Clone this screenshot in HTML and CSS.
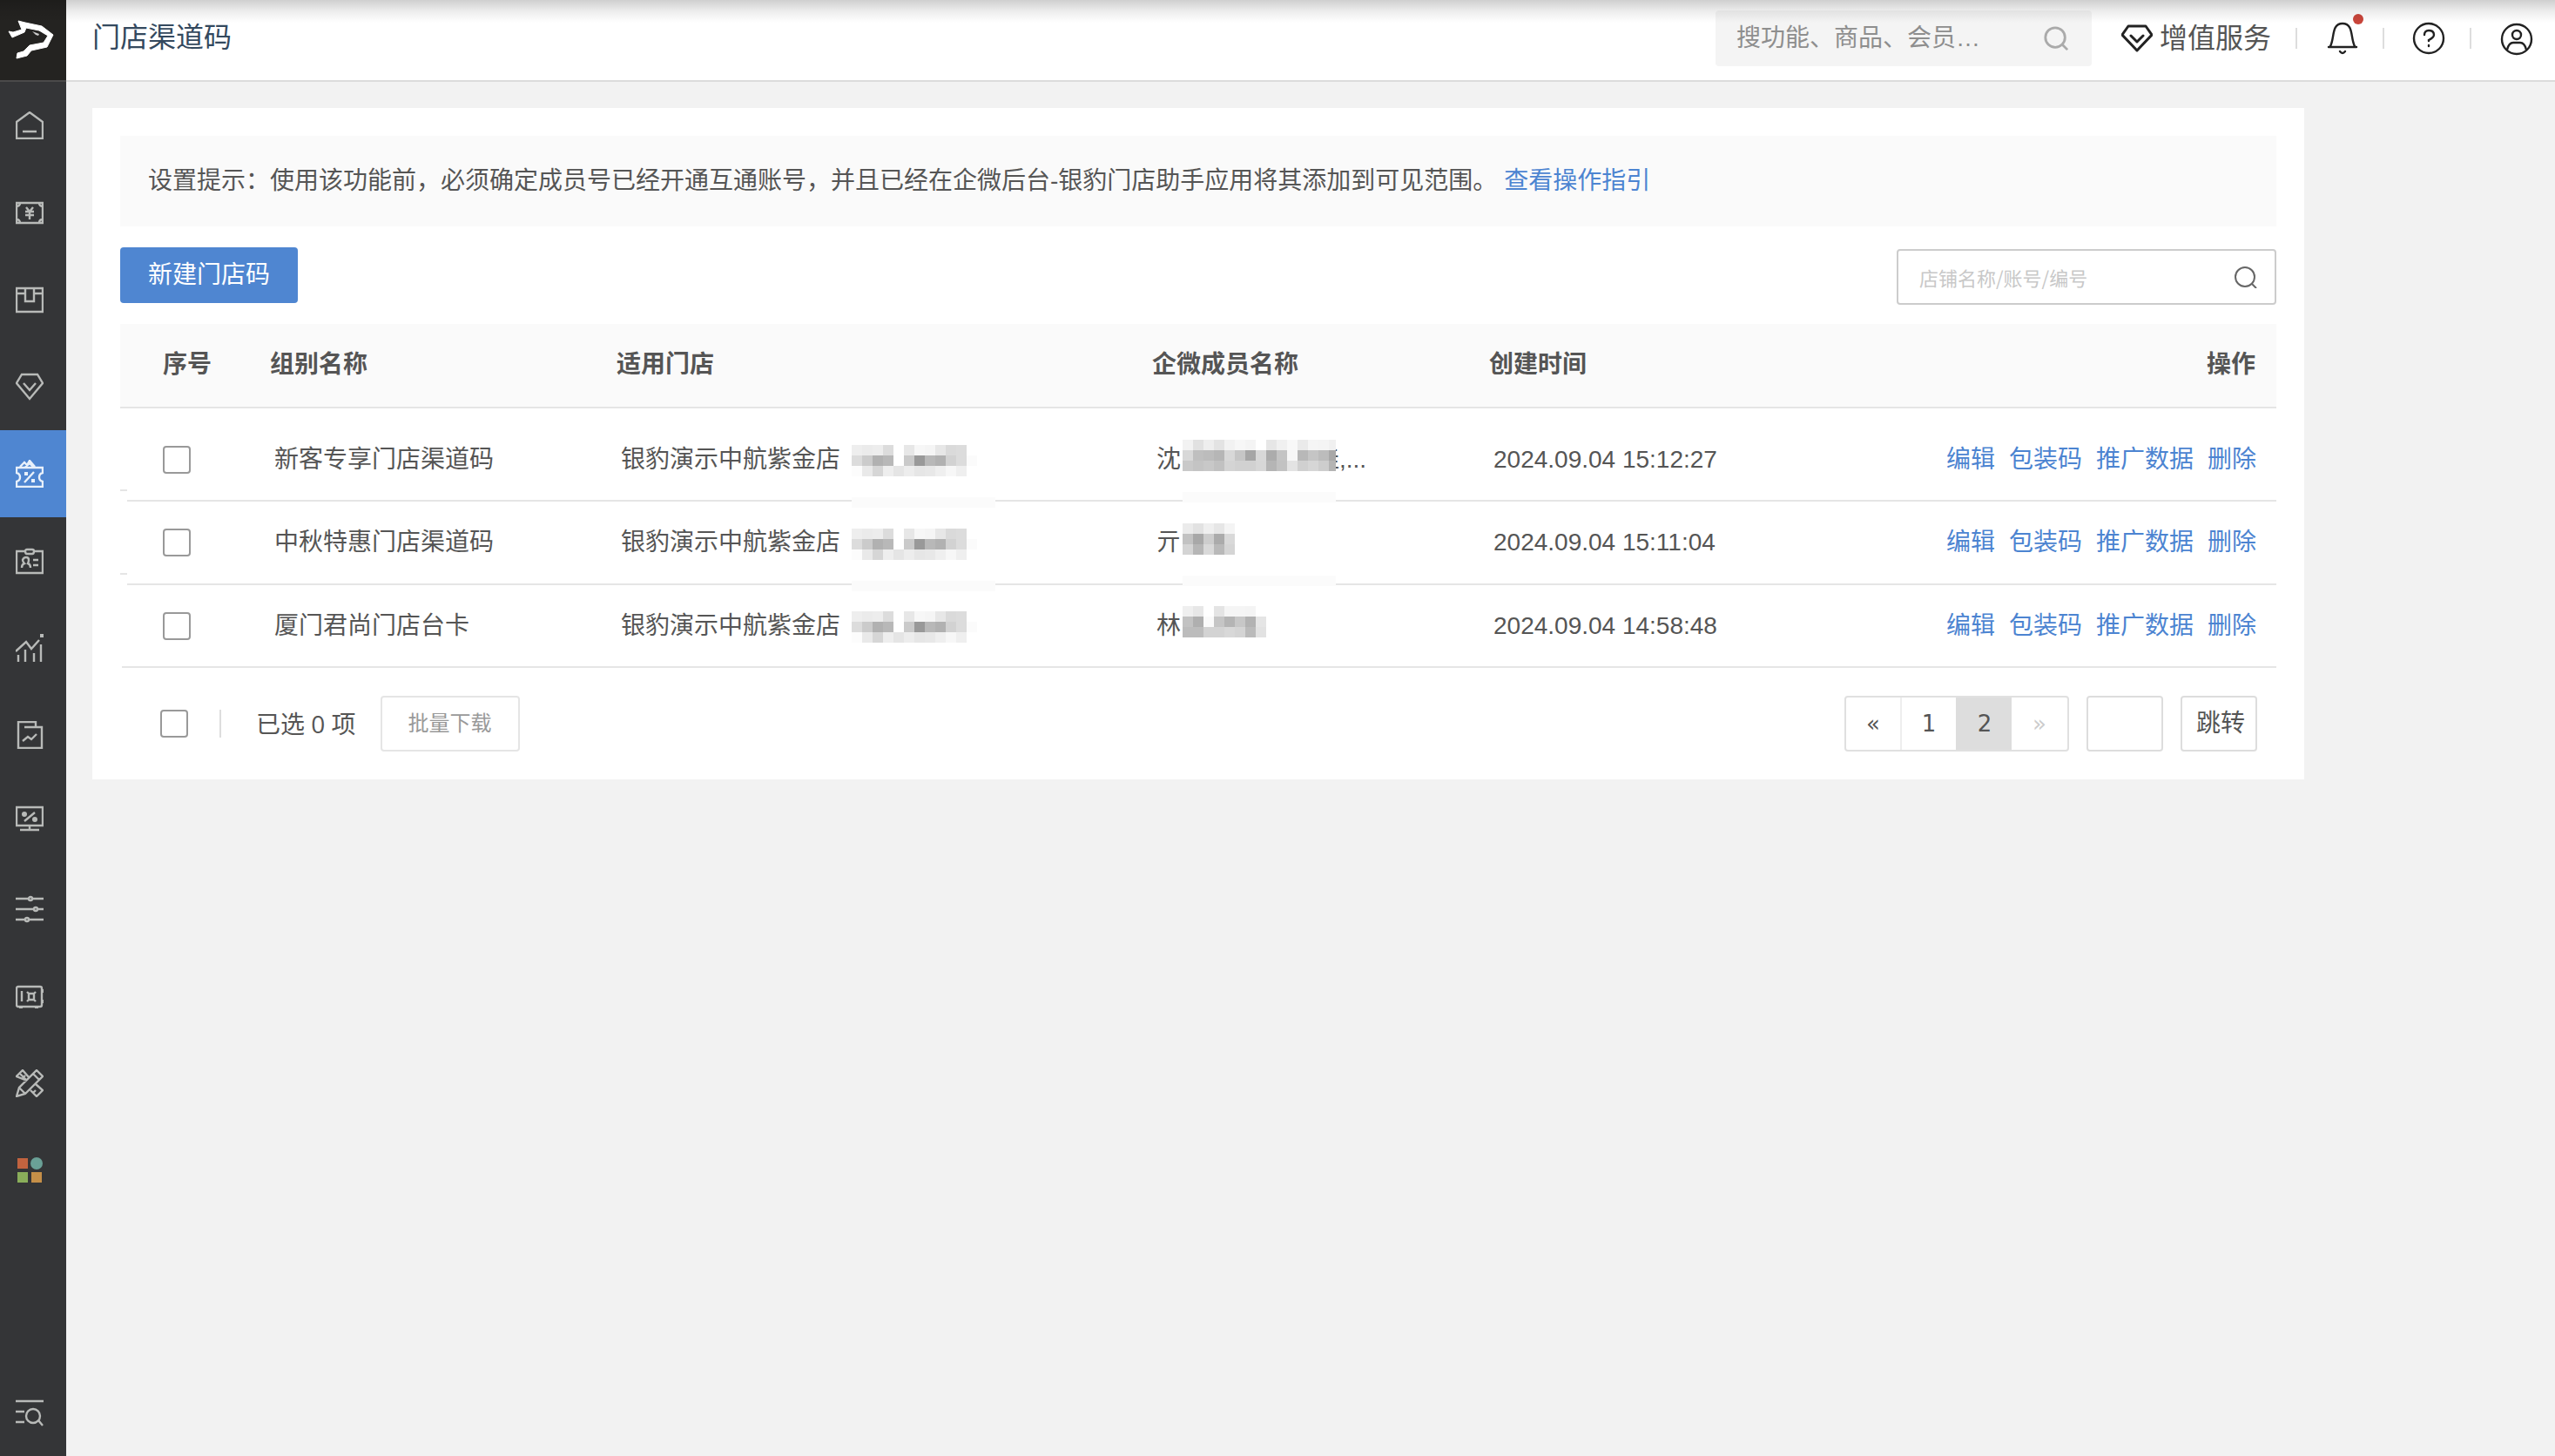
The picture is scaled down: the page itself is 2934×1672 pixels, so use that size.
FILE: index.html
```html
<!DOCTYPE html>
<html lang="zh-CN">
<head>
<meta charset="utf-8">
<title>门店渠道码</title>
<link rel="stylesheet" href="styles.css">
</head>
<body>
<div class="app">
  <aside class="sidebar">
    <a class="logo" href="#" aria-label="首页">
      <svg viewBox="0 0 76 92"><path d="M21 24L29 26L48 30L61 40L54 54L36 58L31 64L19 67L20 61L27 59L34 52L50 49L55 41L45 35L30 32L28 37L14 43L10 36L15 37L25 34Z" fill="#fff" stroke="#fff"/><path d="M37 36L45 39L44 41L41 40Z" fill="#ccc"/></svg>
    </a>
    <nav class="menu" aria-label="主菜单">
      <a href="#" aria-label="概览"><svg viewBox="0 0 32 32"><path d="M1 12L16 1L31 12V31H1ZM8 23H24"/></svg></a>
      <a href="#" aria-label="收银"><svg viewBox="0 0 32 32"><path d="M1 5H31V28H1ZM1 9Q5 9 5 5M27 5Q27 9 31 9M1 24Q5 24 5 28M27 28Q27 24 31 24M12 10L16 15L20 10M11 15H21M11 19H21M16 15V24"/></svg></a>
      <a href="#" aria-label="商品"><svg viewBox="0 0 32 32"><path d="M1 3H31V30H1ZM1 9H11M21 9H31M11 3V18H21V3"/></svg></a>
      <a href="#" aria-label="会员"><svg viewBox="0 0 32 32"><path d="M7 2H25L31 12L16 30L1 12ZM9 12L16 20L23 12"/></svg></a>
      <a href="#" class="active" aria-label="营销" aria-current="page"><svg viewBox="0 0 32 32"><path d="M1 9H31V15Q27 16 27 20Q27 24 31 25V31H1V25Q5 24 5 20Q5 16 1 15ZM5 8L10 3L13 6L16 1L22 8M11 8L16 4L20 8M10 26L21 14"/><path class="solid" d="M10 14h4v4h-4zM18 22h4v4h-4z"/></svg></a>
      <a href="#" aria-label="员工"><svg viewBox="0 0 32 32"><path d="M11 5H1V30H31V5H21M13 3H19Q21 3 21 5Q21 8 19 8H13Q11 8 11 5Q11 3 13 3ZM7 24Q7 20 10 19Q8 17 8 15Q9 12 12 12Q15 12 15 15Q15 17 14 19Q17 20 17 24M20 15H26M20 21H26"/></svg></a>
      <a href="#" aria-label="数据"><svg viewBox="0 0 32 32"><path d="M0 20L12 9L18 17L27 7M3 24V32M11 18V32M21 22V32M29 12V32"/><path class="solid" d="M28 0h4v4h-4z"/></svg></a>
      <a href="#" aria-label="报表"><svg viewBox="0 0 32 32"><path d="M10 7H30V31H3V1H23V7M8 23L14 18L18 21L24 15"/></svg></a>
      <a href="#" aria-label="促销"><svg class="raised" viewBox="0 0 32 32"><path d="M1 3H31V24H1ZM16 24V29M5 29H27M10 19L22 9"/><circle class="solid" cx="10" cy="11" r="3"/><circle class="solid" cx="22" cy="17" r="3"/></svg></a>
      <a href="#" aria-label="设置"><svg viewBox="0 0 32 32"><path d="M0 4H15M19 4H32M0 16H21M25 16H32M0 28H11M15 28H32"/><circle cx="17" cy="4" r="2"/><circle cx="23" cy="16" r="2"/><circle cx="13" cy="28" r="2"/></svg></a>
      <a href="#" aria-label="钱箱"><svg viewBox="0 0 32 32"><path d="M3 5H28Q30 5 30 7V26Q30 28 28 28H3Q1 28 1 26V7Q1 5 3 5ZM7 10V22M15 13H21V20H15ZM13 11L15 13M23 11L21 13M13 22L15 20M23 22L21 20"/><path class="solid" d="M29 8h3v4h-3zM29 20h3v4h-3zM4 28h4v2h-4zM22 28h4v2h-4z"/></svg></a>
      <a href="#" aria-label="工具"><svg viewBox="0 0 32 32"><path d="M1 31L4 21L24 1L31 8L11 28ZM4 21L11 28M20 5L27 12M12 12L5 5M13 13L1 8L8 1L15 9M17 24L24 31L31 24L23 17M20 27L23 24M8 10L11 7"/></svg></a>
      <a href="#" aria-label="应用"><svg viewBox="0 0 32 32"><g stroke="none"><path fill="#c1633f" d="M2 2h12v12H2z"/><circle fill="#6aa096" cx="24" cy="8" r="7"/><path fill="#8aae5a" d="M2 18h12v12H2z"/><path fill="#c58f48" d="M18 18h12v12H18z"/></g></svg></a>
      <a href="#" class="menu-search" aria-label="搜索菜单"><svg viewBox="0 0 32 32"><path d="M0 3H32M0 15H10M0 27H10M26 25L31 31"/><circle cx="20" cy="20" r="8"/></svg></a>
    </nav>
  </aside>

  <div class="page">
    <header class="topbar">
      <h1>门店渠道码</h1>
      <label class="global-search">
        <input type="text" placeholder="搜功能、商品、会员…" aria-label="全局搜索">
        <svg viewBox="0 0 32 32"><circle cx="15" cy="15" r="12"/><path d="M24 24L30 30"/></svg>
      </label>
      <a class="services" href="#">
        <svg viewBox="0 0 36 32"><path d="M8 2H28L35 12L18 30L1 12ZM11 13L18 20L25 13"/></svg>增值服务
      </a>
      <div class="actions">
        <button type="button" aria-label="消息"><svg viewBox="0 0 36 36"><path d="M2 28H34M4 27C9 18 5 1 18 1C31 1 27 18 32 27M15 33Q18 37 21 33"/></svg><span class="dot"></span></button>
        <button type="button" aria-label="帮助"><svg viewBox="0 0 36 36"><circle cx="17" cy="18" r="17"/><path d="M12 14Q12 9 17 9Q23 9 23 14Q23 17 17 20V21M17 26V27"/></svg></button>
        <button type="button" aria-label="账户"><svg viewBox="0 0 36 36"><circle cx="18" cy="19" r="17"/><circle cx="18" cy="14" r="5"/><path d="M7 31Q9 23 14 23H22Q27 23 29 31"/></svg></button>
      </div>
    </header>

    <main class="card">
      <p class="notice">设置提示：使用该功能前，必须确定成员号已经开通互通账号，并且已经在企微后台-银豹门店助手应用将其添加到可见范围。<a href="#">查看操作指引</a></p>
      <div class="toolbar">
        <button class="primary" type="button">新建门店码</button>
        <label class="table-search">
          <input type="text" placeholder="店铺名称/账号/编号" aria-label="搜索门店">
          <svg viewBox="0 0 26 26"><circle cx="12" cy="13" r="11"/><path d="M20 21L25 26"/></svg>
        </label>
      </div>
      <table>
        <colgroup><col class="c-index"><col class="c-group"><col class="c-store"><col class="c-member"><col></colgroup>
        <thead>
          <tr><th>序号</th><th>组别名称</th><th>适用门店</th><th>企微成员名称</th><th><div class="last"><span>创建时间</span><span>操作</span></div></th></tr>
        </thead>
        <tbody>
          <tr>
            <td><input type="checkbox" aria-label="选择 新客专享门店渠道码"></td>
            <td>新客专享门店渠道码</td>
            <td>银豹演示中航紫金店<svg class="mosaic store" data-grid="store" data-cover="165"></svg></td>
            <td><span class="clipped">沈<span>佳,...</span></span><svg class="mosaic member" data-grid="memberA" data-cover="176"></svg></td>
            <td><div class="last"><time>2024.09.04 15:12:27</time><span class="links"><a href="#">编辑</a><a href="#">包装码</a><a href="#">推广数据</a><a href="#">删除</a></span></div></td>
          </tr>
          <tr>
            <td><input type="checkbox" aria-label="选择 中秋特惠门店渠道码"></td>
            <td>中秋特惠门店渠道码</td>
            <td>银豹演示中航紫金店<svg class="mosaic store" data-grid="store" data-cover="165"></svg></td>
            <td>亓<svg class="mosaic member" data-grid="memberB" data-cover="176"></svg></td>
            <td><div class="last"><time>2024.09.04 15:11:04</time><span class="links"><a href="#">编辑</a><a href="#">包装码</a><a href="#">推广数据</a><a href="#">删除</a></span></div></td>
          </tr>
          <tr>
            <td><input type="checkbox" aria-label="选择 厦门君尚门店台卡"></td>
            <td>厦门君尚门店台卡</td>
            <td>银豹演示中航紫金店<svg class="mosaic store" data-grid="store"></svg></td>
            <td>林<svg class="mosaic member" data-grid="memberC"></svg></td>
            <td><div class="last"><time>2024.09.04 14:58:48</time><span class="links"><a href="#">编辑</a><a href="#">包装码</a><a href="#">推广数据</a><a href="#">删除</a></span></div></td>
          </tr>
        </tbody>
      </table>
      <footer class="table-footer">
        <input type="checkbox" aria-label="全选">
        <span class="divider"></span>
        <span class="selected">已选 0 项</span>
        <button class="batch" type="button" disabled>批量下载</button>
        <nav class="pager" aria-label="分页">
          <button type="button">«</button><button type="button">1</button><button type="button" class="current" aria-current="page">2</button><button type="button" disabled>»</button>
        </nav>
        <input class="page-number" type="text" aria-label="页码">
        <button class="jump" type="button">跳转</button>
      </footer>
    </main>
  </div>
</div>
<div class="top-shade"></div>
<script src="mosaic.js"></script>
</body>
</html>
```
FILE: styles.css
```css
* { box-sizing: border-box; }
body {
  margin: 0;
  background: #f2f2f2;
  color: #555;
  font: 28px/40px "Liberation Sans", "Noto Sans CJK SC", sans-serif;
}
a { color: #4c84d1; text-decoration: none; }
button, input { font: inherit; color: inherit; margin: 0; }
button { padding: 0; background: none; border: 0; }
input::placeholder { opacity: 1; }
svg { display: block; fill: none; }

.app { display: flex; min-height: 100vh; }

/* Sidebar */
.sidebar {
  display: flex;
  flex-direction: column;
  flex: none;
  width: 76px;
  background: #343537;
}
.logo { height: 94px; background: #242321; border-bottom: 2px solid #4a4a4a; }
.menu { display: flex; flex-direction: column; flex: 1; }
.menu a {
  display: flex;
  align-items: center;
  height: 100px;
  padding-left: 18px;
}
.menu svg { width: 32px; height: 32px; stroke: #b8bab8; stroke-width: 2.4; }
.menu .raised { margin-bottom: 8px; }
.menu .solid { fill: #b8bab8; stroke: none; }
.menu .active { background: #4f86d1; }
.menu .active svg { stroke: #e8f0fa; }
.menu .active .solid { fill: #e8f0fa; }
.menu .menu-search { margin-top: auto; }

/* Top bar */
.page { flex: 1; min-width: 0; }
.topbar {
  display: flex;
  align-items: center;
  height: 94px;
  padding-bottom: 4px;
  background: #fff;
  border-bottom: 2px solid #dcdcdc;
}
h1 {
  flex: 1;
  margin: 0;
  padding: 0 0 2px 30px;
  color: #34495e;
  font-size: 32px;
  font-weight: 400;
}
.global-search {
  display: flex;
  align-items: center;
  width: 432px;
  height: 64px;
  padding: 0 26px 0 24px;
  background: #f4f4f4;
  border-radius: 4px;
}
.global-search input {
  flex: 1;
  min-width: 0;
  padding: 0;
  background: none;
  border: 0;
}
.global-search input::placeholder { color: #8e8e8e; }
.global-search svg { width: 30px; height: 30px; stroke: #aaa; stroke-width: 3; }
.services {
  display: flex;
  align-items: center;
  gap: 8px;
  margin: 0 28px 0 34px;
  color: #555;
  font-size: 32px;
}
.services svg { width: 36px; height: 32px; stroke: #222; stroke-width: 3; stroke-linejoin: round; stroke-linecap: round; }
.actions { display: flex; }
.actions button {
  position: relative;
  display: flex;
  align-items: center;
  height: 36px;
  padding: 0 28px 0 34px;
}
.actions button::before {
  content: "";
  width: 2px;
  height: 24px;
  margin: 0 34px 0 -34px;
  background: #ddd;
}
.actions button:last-child { padding-right: 26px; }
.actions svg { width: 36px; height: 36px; stroke: #222; stroke-width: 2.4; stroke-linecap: round; overflow: visible; }
.dot {
  position: absolute;
  top: -10px;
  right: 22px;
  width: 12px;
  height: 12px;
  border-radius: 50%;
  background: #c9453a;
}
.top-shade {
  position: absolute;
  inset: 0 0 auto;
  height: 26px;
  background: linear-gradient(rgba(0, 0, 0, .19), rgba(0, 0, 0, .07) 50%, transparent);
  pointer-events: none;
}

/* Content card */
.card { margin: 30px 288px 0 30px; padding: 32px; background: #fff; }
.notice {
  margin: 0 0 24px;
  padding: 32px;
  background: #fafafa;
}
.notice a { margin-left: 8px; }
.toolbar { display: flex; justify-content: space-between; margin-bottom: 24px; }
.primary {
  width: 204px;
  height: 64px;
  background: #4f86d1;
  border-radius: 4px;
  color: #fff;
}
.table-search {
  display: flex;
  align-items: center;
  width: 436px;
  height: 64px;
  margin-top: 2px;
  margin-bottom: -2px;
  padding: 0 20px 0 24px;
  border: 2px solid #ccc;
  border-radius: 4px;
}
.table-search input {
  flex: 1;
  min-width: 0;
  padding: 0;
  border: 0;
  font-family: "Noto Sans CJK SC", sans-serif;
  font-size: 22px;
}
.table-search input::placeholder { color: #c8c8c8; }
.table-search svg { width: 26px; height: 26px; stroke: #666; stroke-width: 2; }

/* Table */
table { width: 100%; border-collapse: collapse; table-layout: fixed; }
.c-index { width: 172px; }
.c-group { width: 398px; }
.c-store { width: 615px; }
.c-member { width: 387px; }
th {
  height: 96px;
  padding: 0 0 2px;
  background: #fafafa;
  border-bottom: 2px solid #e5e5e5;
  text-align: left;
}
th:first-child, td:first-child { padding-left: 49px; }
td { position: relative; height: 96px; padding: 0 0 2px 5px; white-space: nowrap; }
tbody tr {
  background:
    linear-gradient(#e5e5e5, #e5e5e5) 8px 100% / 100% 2px no-repeat,
    linear-gradient(#e5e5e5, #e5e5e5) 0 calc(100% - 12px) / 8px 2px no-repeat;
}
tbody tr:first-child td { height: 108px; padding-top: 12px; }
tbody tr:last-child { background: linear-gradient(#e5e5e5, #e5e5e5) 2px 100% / 100% 2px no-repeat; }
tbody tr:last-child td { height: 95px; }
.last { display: flex; justify-content: space-between; padding-right: 24px; }
td .last { padding-right: 23px; }
.links { display: flex; gap: 16px; }
.clipped span { margin-left: 154px; }
.mosaic { position: absolute; width: 180px; height: 72px; }
.mosaic.store { left: 270px; bottom: -7px; }
.mosaic.member { left: 35px; bottom: -1px; }

input[type="checkbox"] {
  appearance: none;
  display: block;
  width: 32px;
  height: 32px;
  background: #fff;
  border: 2px solid #999;
  border-radius: 4px;
}

/* Footer */
.table-footer {
  display: flex;
  align-items: center;
  padding: 32px 22px 0 46px;
}
.selected { font-family: "Open Sans", "Noto Sans CJK SC", sans-serif; }
.divider { width: 2px; height: 32px; margin: 0 40px 0 36px; background: #ddd; }
.batch {
  width: 160px;
  height: 64px;
  margin-left: 28px;
  border: 2px solid #e5e5e5;
  border-radius: 4px;
  color: #999;
  font-size: 24px;
}
.pager {
  display: flex;
  margin-left: auto;
  border: 2px solid #e0e0e0;
  border-radius: 4px;
  font-family: "DejaVu Sans", sans-serif;
}
.pager button { width: 64px; height: 60px; font-size: 26px; }
.pager button:first-child { width: 62px; }
.pager button + button { border-left: 2px solid #eee; }
.pager .current { background: #ddd; border-color: #ddd; }
.pager button:disabled { border: 0; color: #ccc; }
.page-number {
  width: 88px;
  height: 64px;
  margin: 0 20px;
  border: 2px solid #ddd;
  border-radius: 4px;
  text-align: center;
}
.jump {
  width: 88px;
  height: 64px;
  padding-left: 4px;
  border: 2px solid #ddd;
  border-radius: 4px;
}
```
FILE: mosaic.js
```js
// Grey levels (two hex digits per cell, ".." for an empty cell) of the masked text.
const grids = {
  store: [
    "ee eb ed dc .. e7 f7 f5 e7 da dc",
    "dc cb b1 b8 .. ca 99 b8 b1 d2 dc fb",
    "fc e9 d6 ee e5 ed e6 e8 ef f7 ef"
  ],
  memberA: [
    "f2 e1 ee e3 f2 f7 f4 .. e6 f0 f8 ea f5 f4 f0",
    "d8 bf bc b6 d8 c6 a6 d8 ac c4 f7 b8 c5 bc a8",
    "c9 c4 c8 c1 d4 d1 d1 d7 b5 c2 e3 d0 d6 cd b4"
  ],
  memberB: [
    "eb e2 ef e6 f4",
    "c2 a8 cd ab d9",
    "d4 b6 d9 b9 d5"
  ],
  memberC: [
    "ef e7 .. e4 f5 f5 f4",
    "c2 af fa c5 b4 c7 b2 e5",
    "bc bc d3 d3 d8 d4 ba e2"
  ]
};
const CELL = 12;

function addRect(svg, x, y, width, shade) {
  const rect = document.createElementNS("http://www.w3.org/2000/svg", "rect");
  rect.setAttribute("x", x);
  rect.setAttribute("y", y);
  rect.setAttribute("width", width);
  rect.setAttribute("height", CELL);
  rect.setAttribute("fill", "#" + shade.repeat(3));
  svg.append(rect);
}

document.querySelectorAll(".mosaic").forEach(svg => {
  const name = svg.dataset.grid;
  grids[name].forEach((row, y) => row.split(" ").forEach((shade, x) => {
    if (shade === "..") return;
    const width = name === "memberA" && x === 14 ? 8 : CELL;
    addRect(svg, x * CELL, y * CELL, width, shade);
  }));
  if (svg.dataset.cover) addRect(svg, 0, 60, Number(svg.dataset.cover), "fb");
});
```
